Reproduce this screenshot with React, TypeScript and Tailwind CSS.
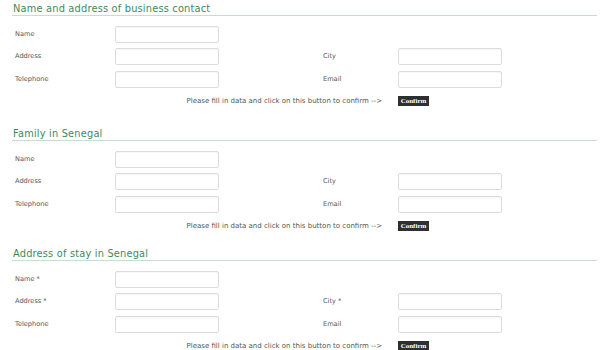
import React from "react";

const Field = () => (
  <input
    type="text"
    className="w-[104px] h-[17px] rounded-[2px] border border-[#dcdcdc] bg-white shadow-[inset_0_1px_1px_rgba(0,0,0,0.04)] outline-none"
  />
);

type Row = { left: string; right?: string };

const Section = ({
  title,
  rows,
  bottom,
}: {
  title: string;
  rows: Row[];
  bottom: string;
}) => (
  <div className={bottom}>
    <div className="ml-[12px] mr-[3px] border-b border-[#c9dcd3] pl-[1px] h-[16px] flex items-end">
      <h2 className="text-[9.8px] leading-[13px] text-[#3b8b5b] tracking-[0.2px]">{title}</h2>
    </div>
    <div className="pt-[10px] pl-[15px]">
      {rows.map((row, i) => (
        <div key={i} className={`flex items-center h-[17px] ${i === 0 ? "" : i === 1 ? "mt-[5px]" : "mt-[6px]"}`}>
          <span className="w-[100px] text-[6.6px] text-[#555]">{row.left}</span>
          <Field />
          {row.right && (
            <>
              <span className="ml-[104px] w-[75px] text-[6.6px] text-[#555]">{row.right}</span>
              <Field />
            </>
          )}
        </div>
      ))}
      <div className="flex items-center h-[10px] mt-[8px]">
        <span className="w-[368px] text-right text-[7px] text-[#555] pr-[1px]">
          Please fill in data and click on this button to confirm --&gt;
        </span>
        <button className="ml-[15px] w-[31px] h-[10px] bg-[#2f2f2f] text-white font-['Liberation_Serif',serif] font-bold text-[7px] leading-[10px]">
          Confirm
        </button>
      </div>
    </div>
  </div>
);

export default function App() {
  return (
    <div className="w-[600px] h-[350px] overflow-hidden bg-white antialiased font-['DejaVu_Sans',Verdana,sans-serif]">
      <Section
        title="Name and address of business contact"
        bottom="pb-[19px]"
        rows={[
          { left: "Name" },
          { left: "Address", right: "City" },
          { left: "Telephone", right: "Email" },
        ]}
      />
      <Section
        title="Family in Senegal"
        bottom="pb-[14px]"
        rows={[
          { left: "Name" },
          { left: "Address", right: "City" },
          { left: "Telephone", right: "Email" },
        ]}
      />
      <Section
        title="Address of stay in Senegal"
        bottom=""
        rows={[
          { left: "Name *" },
          { left: "Address *", right: "City *" },
          { left: "Telephone", right: "Email" },
        ]}
      />
    </div>
  );
}
